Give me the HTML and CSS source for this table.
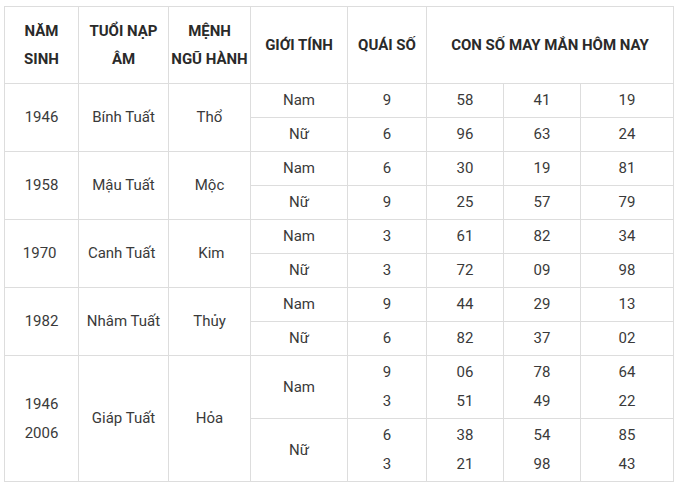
FILE: index.html
```html
<!DOCTYPE html>
<html lang="vi">
<head>
<meta charset="utf-8">
<link rel="stylesheet" href="styles.css">
</head>
<body>
<table class="tbl">
  <colgroup>
    <col class="c1"><col class="c2"><col class="c3"><col class="c4"><col class="c5"><col class="c6"><col class="c7"><col class="c8">
  </colgroup>
  <thead>
    <tr>
      <th>NĂM<br>SINH</th>
      <th>TUỔI NẠP<br>ÂM</th>
      <th>MỆNH<br>NGŨ HÀNH</th>
      <th>GIỚI TÍNH</th>
      <th>QUÁI SỐ</th>
      <th colspan="3">CON SỐ MAY MẮN HÔM NAY</th>
    </tr>
  </thead>
  <tbody>
    <tr><td rowspan="2">1946</td><td rowspan="2">Bính Tuất</td><td rowspan="2">Thổ</td><td>Nam</td><td>9</td><td>58</td><td>41</td><td>19</td></tr>
    <tr><td>Nữ</td><td>6</td><td>96</td><td>63</td><td>24</td></tr>
    <tr><td rowspan="2">1958</td><td rowspan="2">Mậu Tuất</td><td rowspan="2">Mộc</td><td>Nam</td><td>6</td><td>30</td><td>19</td><td>81</td></tr>
    <tr><td>Nữ</td><td>9</td><td>25</td><td>57</td><td>79</td></tr>
    <tr><td rowspan="2">1970&nbsp;</td><td rowspan="2">Canh Tuất&nbsp;</td><td rowspan="2">&nbsp;Kim</td><td>Nam</td><td>3</td><td>61</td><td>82</td><td>34</td></tr>
    <tr><td>Nữ</td><td>3</td><td>72</td><td>09</td><td>98</td></tr>
    <tr><td rowspan="2">1982</td><td rowspan="2">Nhâm Tuất</td><td rowspan="2">Thủy</td><td>Nam</td><td>9</td><td>44</td><td>29</td><td>13</td></tr>
    <tr><td>Nữ</td><td>6</td><td>82</td><td>37</td><td>02</td></tr>
    <tr><td rowspan="2">1946<br>2006</td><td rowspan="2">Giáp Tuất</td><td rowspan="2">Hỏa</td><td>Nam</td><td>9<br>3</td><td>06<br>51</td><td>78<br>49</td><td>64<br>22</td></tr>
    <tr><td>Nữ</td><td>6<br>3</td><td>38<br>21</td><td>54<br>98</td><td>85<br>43</td></tr>
  </tbody>
</table>
</body>
</html>
```

FILE: styles.css
```css
html, body {
  margin: 0;
  padding: 0;
  background: #ffffff;
}
body {
  padding: 6px 0 0 4px;
  font-family: Roboto, "Liberation Sans", Arial, sans-serif;
  font-size: 15px;
  color: #3a3a3a;
}
.tbl {
  border-collapse: collapse;
  table-layout: fixed;
  width: 669px;
}
.c1 { width: 74px; }
.c2 { width: 90px; }
.c3 { width: 82px; }
.c4 { width: 97px; }
.c5 { width: 79px; }
.c6 { width: 77px; }
.c7 { width: 77px; }
.c8 { width: 93px; }
.tbl th, .tbl td {
  border: 1px solid #dddddd;
  text-align: center;
  vertical-align: middle;
  padding: 0;
}
.tbl th {
  font-weight: 700;
  color: #2a2a2a;
  line-height: 28px;
  padding: 10px 0;
  height: 56px;
}
.tbl td {
  line-height: 29px;
  padding: 2px 0;
}
```
